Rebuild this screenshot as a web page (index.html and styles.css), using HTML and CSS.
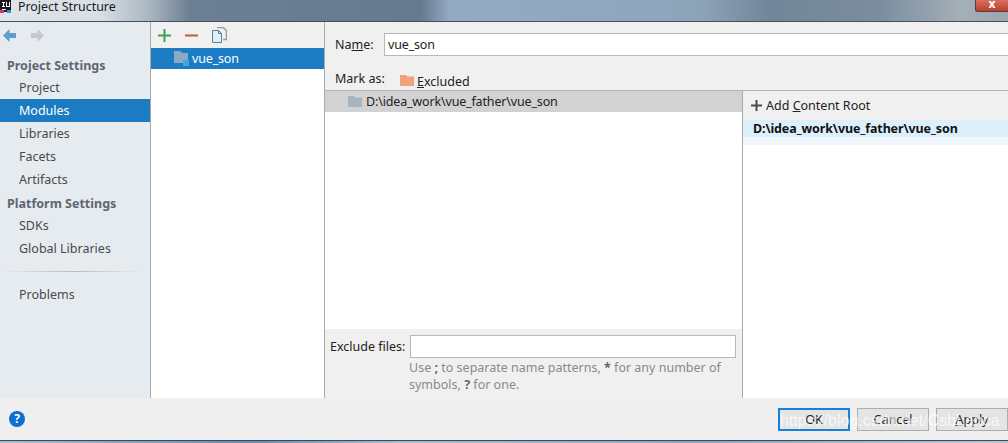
FILE: index.html
```html
<!DOCTYPE html>
<html lang="en">
<head>
<meta charset="utf-8">
<title>Project Structure</title>
<link rel="stylesheet" href="styles.css">
</head>
<body>
<div class="window">
  <header class="titlebar">
    <svg class="app-icon" width="12" height="13" viewBox="0 0 12 13"><rect width="11" height="12" fill="#1a1a1e"/><rect x="0" y="10" width="4" height="3" fill="#d8327a"/><rect x="7" y="10" width="4" height="3" fill="#3a8fe0"/><path d="M2 2h3v1H4v3h1v1H2V6h1V3H2zM6 2h1v4h2V2h1v5H6z" fill="#fff"/><rect x="2" y="9" width="4" height="1" fill="#fff"/></svg>
    <span class="title">Project Structure</span>
    <div class="close"><span class="close-x">x</span></div>
  </header>
  <div class="main">
    <nav class="sidebar">
      <div class="nav-arrows">
        <svg width="13" height="13" viewBox="0 0 13 13"><path d="M6.500 0v4H13v5H6.500v4L0 6.500z" fill="#5a9fd0"/></svg>
        <svg width="13" height="13" viewBox="0 0 13 13"><path d="M6.500 0v4H0v5h6.500v4L13 6.500z" fill="#c4c8cc"/></svg>
      </div>
      <div class="nav-head">Project Settings</div>
      <div class="nav-item">Project</div>
      <div class="nav-item active">Modules</div>
      <div class="nav-item">Libraries</div>
      <div class="nav-item">Facets</div>
      <div class="nav-item">Artifacts</div>
      <div class="nav-head">Platform Settings</div>
      <div class="nav-item">SDKs</div>
      <div class="nav-item">Global Libraries</div>
      <div class="nav-sep"></div>
      <div class="nav-item">Problems</div>
    </nav>
    <section class="modules">
      <div class="toolbar">
        <svg width="13" height="13" viewBox="0 0 13 13"><path d="M5.500 0h2v5.500H13v2H7.500V13h-2V7.500H0v-2h5.500z" fill="#3aa053"/></svg>
        <svg width="13" height="13" viewBox="0 0 13 13"><rect y="5.500" width="13" height="2" fill="#c4574c"/></svg>
        <svg width="15" height="16" viewBox="0 0 15 16"><path d="M5 .5h6l3.500 3v9H11" fill="none" stroke="#9a9a9a" stroke-width="1.500"/><path d="M.5 3.500h6l3 3v9h-9z" fill="#e4edf3" stroke="#4f80a6"/><path d="M6.500 3.500v3h3" fill="none" stroke="#4f80a6"/></svg>
      </div>
      <div class="module-row">
        <svg width="15" height="15" viewBox="0 0 15 15"><path d="M0 0h6l2 2h6v10H0z" fill="#8aa9c2"/><rect x="9" y="9" width="6" height="6" fill="#3fa9dc"/></svg>
        <span class="narrow">vue_son</span>
      </div>
    </section>
    <section class="detail">
      <div class="name-row">
        <label class="name-label">Na<u>m</u>e:</label>
        <div class="field name-field narrow">vue_son</div>
      </div>
      <div class="mark-row">
        <span class="mark-label">Mark as:</span>
        <svg class="mark-icon" width="14" height="11" viewBox="0 0 14 11"><path d="M0 0h6l1.500 1.500H14V11H0z" fill="#f2a27a"/></svg>
        <span class="excluded"><u>E</u>xcluded</span>
      </div>
      <div class="panes">
        <div class="tree-pane">
          <div class="tree-root">
            <svg width="14" height="11" viewBox="0 0 14 11"><path d="M0 0h6l1.500 1.500H14V11H0z" fill="#a9b5bd"/></svg>
            <span class="narrow">D:\idea_work\vue_father\vue_son</span>
          </div>
          <div class="tree-empty"></div>
          <div class="exclude">
            <div class="exclude-row">
              <label>Exclude files:</label>
              <div class="field exclude-field"></div>
            </div>
            <p class="hint">Use <b>;</b> to separate name patterns, <b>*</b> for any number of symbols, <b>?</b> for one.</p>
          </div>
        </div>
        <div class="roots-pane">
          <div class="add-root">
            <svg width="11" height="11" viewBox="0 0 11 11"><path d="M4.500 0h2v4.500H11v2H6.500V11h-2V6.500H0v-2h4.500z" fill="#4a4a4a"/></svg>
            <span>Add <u>C</u>ontent Root</span>
          </div>
          <div class="root-path">D:\idea_work\vue_father\vue_son</div>
          <div class="root-strip"></div>
        </div>
      </div>
    </section>
  </div>
  <footer class="footer">
    <div class="help">?</div>
    <div class="buttons">
      <div class="btn default">OK</div>
      <div class="btn">Cancel</div>
      <div class="btn"><u>A</u>pply</div>
    </div>
  </footer>
  <div class="desk-strip"></div>
  <div class="watermark">https://blog.csdn.net/CsbLanca</div>
</div>
</body>
</html>
```
FILE: styles.css
```css
* { box-sizing: border-box; }
html, body { margin: 0; padding: 0; }
body {
  width: 1008px;
  height: 443px;
  overflow: hidden;
  font-family: "Noto Sans", "Liberation Sans", sans-serif;
  font-size: 12.5px;
  color: #222;
  background: #fff;
}
.window { position: relative; width: 1008px; height: 443px; display: flex; flex-direction: column; overflow: hidden; }
.titlebar {
  height: 22px;
  flex: none;
  display: flex;
  align-items: flex-start;
  gap: 6px;
  border-bottom: 1px solid #474f58;
  background: linear-gradient(90deg, #dfe5ea 0, #d8dfe5 100px, #a9b5c0 150px, #6c7f94 190px, #66798e 420px, #93aac2 450px, #8fa6bd 650px, #8da3b8 700px, #728699 770px, #7b8d9e 880px, #a4afb8 960px, #9aa6b0 1008px);
}
.app-icon { flex: none; }
.title { font-size: 12.4px; line-height: 13px; color: #1a1a1a; }
.close {
  margin-left: auto;
  width: 33px;
  height: 12px;
  background: linear-gradient(#d8705e, #b8402e);
  border: 1px solid #5e3a38;
  border-top: 0;
  border-right: 0;
  border-bottom-left-radius: 3px;
  display: flex;
  justify-content: center;
  align-items: flex-start;
  overflow: hidden;
}
.close-x { color: #fff; font-weight: 700; font-size: 12px; line-height: 7px; }
.main { flex: 1; display: flex; min-height: 0; }
.sidebar { width: 151px; flex: none; background: #e6ebf0; border-right: 1px solid #aaa; color: #444; }
.nav-arrows { height: 31px; display: flex; align-items: flex-start; gap: 15px; padding: 7px 0 0 3px; }
.nav-head { height: 23px; line-height: 26px; padding-left: 7px; font-weight: 700; color: #5e6670; }
.nav-item { height: 23px; line-height: 24px; padding-left: 19px; color: #4a4a4a; }
.nav-item.active { background: #1b7cc4; color: #fff; }
.nav-sep { height: 1px; margin: 11px 7px 11px 4px; background: linear-gradient(90deg, #e6ebf0, #bbb 50%, #e6ebf0); }
.modules { width: 174px; flex: none; background: #fff; border-right: 1px solid #aaa; }
.toolbar { height: 26px; display: flex; align-items: center; gap: 14px; padding-left: 7px; background: #f0f0f0; }
.module-row { height: 21px; background: #1b7cc4; color: #fff; display: flex; align-items: center; gap: 3px; padding-left: 23px; }
.narrow { letter-spacing: -.16px; }
.detail { flex: 1; min-width: 0; display: flex; flex-direction: column; background: #f0f0f0; }
.name-row { height: 44px; display: flex; align-items: center; padding: 0 0 0 10px; }
.name-label { width: 49px; }
.field { background: #fff; border: 1px solid #b8b8b8; }
.name-field { flex: 1; height: 23px; line-height: 21px; padding-left: 3px; margin-right: -2px; }
.mark-row { height: 25px; display: flex; align-items: center; padding-left: 10px; border-bottom: 1px solid #b4b4b4; }
.mark-label { width: 65px; }
.mark-icon { margin-top: 5px; }
.excluded { margin-left: 3px; margin-top: 6px; }
.panes { flex: 1; display: flex; min-height: 0; }
.tree-pane { width: 417px; flex: none; display: flex; flex-direction: column; border-right: 1px solid #aaa; box-sizing: content-box; }
.tree-root { height: 21px; background: #d2d2d2; display: flex; align-items: center; gap: 4px; padding-left: 23px; }
.tree-empty { flex: 1; background: #fff; }
.exclude { height: 69px; background: #f0f0f0; padding: 6px 6px 0 5px; }
.exclude-row { display: flex; align-items: center; gap: 5px; color: #222; }
.exclude-field { flex: 1; height: 23px; }
.hint { margin: 1px 0 0 79px; font-size: 12.5px; line-height: 17px; color: #8a8a8a; }
.hint b { color: #666; }
.roots-pane { flex: 1; background: #fff; min-width: 0; }
.add-root { height: 29px; background: #f0f0f0; display: flex; align-items: center; gap: 4px; padding-left: 8px; }
.root-path { height: 17px; line-height: 18px; background: #dcf0fc; font-weight: 700; padding-left: 10px; color: #111; letter-spacing: -.13px; }
.root-strip { height: 8px; background: #f0f8fe; }
.footer { height: 42px; flex: none; background: #efefef; display: flex; align-items: center; padding: 0 0 0 9px; }
.help { width: 16px; height: 16px; border-radius: 50%; background: #0f6fcf; color: #fff; font-size: 12px; font-weight: 700; line-height: 16px; text-align: center; }
.buttons { margin-left: auto; display: flex; gap: 7px; margin-top: 1px; }
.btn { width: 72px; height: 23px; line-height: 21px; text-align: center; background: #e4e4e4; border: 1px solid #adadad; }
.btn.default { border: 2px solid #1780d8; line-height: 19px; }
.desk-strip { height: 3px; flex: none; border-top: 1px solid #3f4850; background: linear-gradient(90deg, #a8bdd2, #6b8bad 250px, #a6bcd1 400px, #8ca6c0 700px, #b8c8d6); }
.watermark { position: absolute; left: 780px; top: 410px; font-family: "Liberation Sans", sans-serif; font-size: 16px; line-height: 22px; color: rgba(255,255,255,.72); white-space: nowrap; }
```
